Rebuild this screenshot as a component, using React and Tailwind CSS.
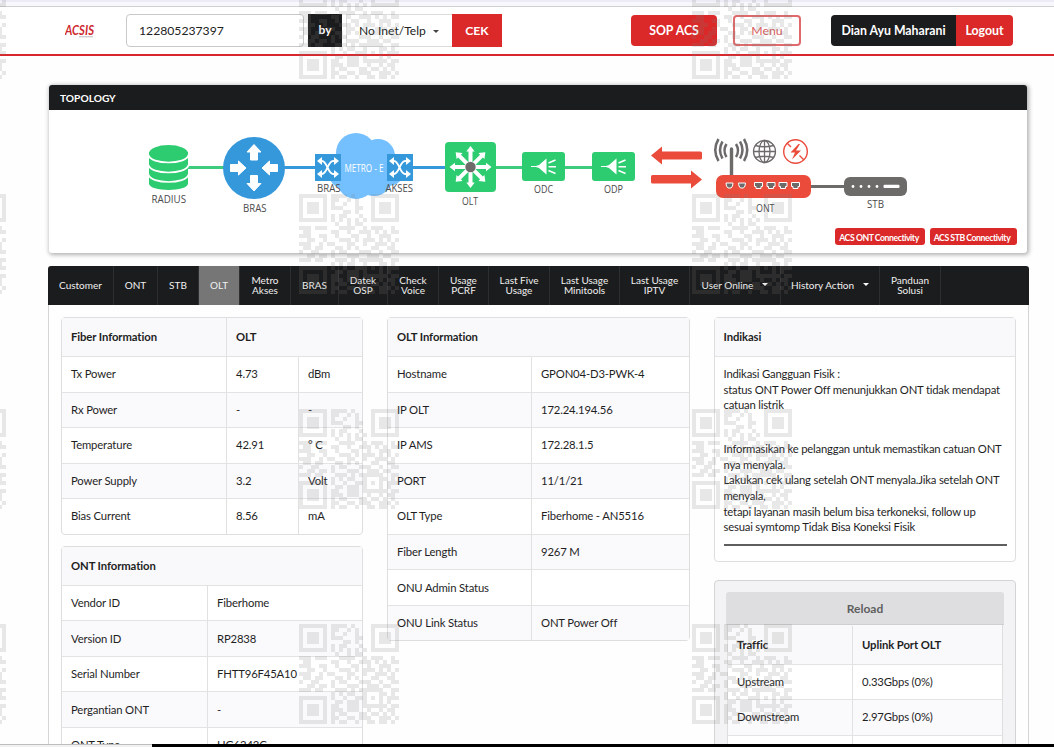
import React from "react";
import clsx from "clsx";

const qrRows = [
  "1111111011110100001111111",
  "1000001011001010001000001",
  "1011101010010010001011101",
  "1011101011100011001011101",
  "1011101000011010001011101",
  "1000001010110001001000001",
  "1111111010101010101111111",
  "0000000001001011000000000",
  "1110111000111100101110010",
  "0110000011001001110101011",
  "1110011001000110010011100",
  "0011001000111010111010101",
  "1110010110001100100111010",
  "0110110001101010001100110",
  "1001100010110001110010011",
  "0011011010001110011101100",
  "1110110001110101111110011",
  "0000000010101100100011010",
  "1111111010010011101010111",
  "1000001001101110100010100",
  "1011101011001110111111011",
  "1011101011101110010010110",
  "1011101010110001101101010",
  "1000001011001101110011101",
  "1111111010110010011011010",
];

const qrPath = qrRows
  .map((row, y) =>
    row
      .split("")
      .map((c, x) => (c === "1" ? `M${x * 4} ${y * 4}h4v4h-4z` : ""))
      .join("")
  )
  .join("");

function Watermark() {
  return (
    <svg className="absolute inset-0 pointer-events-none" width="1054" height="747" shapeRendering="crispEdges">
      {[-94, 299, 692].map((x) =>
        [-21, 194, 409, 624].map((y) => (
          <path key={`${x}-${y}`} d={qrPath} transform={`translate(${x} ${y})`} fill="#808080" fillOpacity="0.18" />
        ))
      )}
    </svg>
  );
}

function Caret({ className }) {
  return <span className={clsx("inline-block border-x-[3px] border-x-transparent border-t-[3px]", className)} />;
}

function Header() {
  return (
    <header className="h-[56px] border-b-2 border-[#d8262c] bg-white">
      <div className="h-[2px] bg-[#edebf5]" />
      <div className="h-[5px] border-b border-[#cfcfcf] bg-[#f8f8fc]" />
      <div className="flex items-start pt-[7px]">
        <div className="ml-[65px] w-[61px] pt-[8px] italic">
          <svg width="34" height="18">
            <text x="0" y="12.5" textLength="29" lengthAdjust="spacingAndGlyphs" fill="#cf2a30" fontSize="13" fontWeight="700">
              ACSIS
            </text>
            <path d="M14 14.8h14" stroke="#bbb" strokeWidth="1" />
          </svg>
        </div>
        <div className="flex h-[33px] w-[178px] items-center rounded-[4px] border border-[#c9c9c9] px-3 pt-px text-[12.2px]">
          122805237397
        </div>
        <div className="ml-[4px] flex h-[33px] w-[34px] items-center justify-center bg-[#1b1c1d] pb-px text-[12px] font-bold text-white">by</div>
        <div className="ml-[4px] flex h-[33px] w-[106px] items-center border border-r-0 border-[#dcdcdc] pl-[12px] pt-px text-[12.1px]">
          <span className="whitespace-nowrap">No Inet/Telp</span>
          <Caret className="ml-[7px] border-t-[#444]" />
        </div>
        <div className="flex h-[33px] w-[50px] items-center justify-center bg-[#db2828] pt-px text-[12.2px] font-bold text-white">CEK</div>
        <div className="mt-px ml-[129px] flex h-[31px] w-[86px] items-center justify-center rounded-[4px] bg-[#db2828] pt-px text-[12.3px] font-bold text-white">
          SOP ACS
        </div>
        <div className="mt-px ml-[16px] flex h-[31px] w-[68px] items-center justify-center rounded-[4px] border-2 border-[#e0696b] pt-px text-[12.3px] text-[#d9605e]">
          Menu
        </div>
        <div className="mt-px ml-[30px] flex h-[31px] w-[125px] items-center justify-center rounded-l-[4px] bg-[#1b1c1d] pt-px text-[12.3px] font-bold text-white">
          Dian Ayu Maharani
        </div>
        <div className="mt-px flex h-[31px] w-[57px] items-center justify-center rounded-r-[4px] bg-[#db2828] pt-px text-[12.3px] font-bold text-white">
          Logout
        </div>
      </div>
    </header>
  );
}

function NodeLabel({ x, y, width, children, fill = "#4a4a4a" }) {
  return (
    <text
      x={x}
      y={y}
      textLength={width}
      lengthAdjust="spacingAndGlyphs"
      fill={fill}
      fontSize="11"
      fontFamily="'Open Sans', 'Noto Sans', sans-serif"
      fontWeight="500"
    >
      {children}
    </text>
  );
}

function Shuffle({ x, y }) {
  return (
    <g transform={`translate(${x} ${y})`}>
      <rect width="26" height="27" fill="#3598db" />
      <g fill="none" stroke="#fff" strokeWidth="1.8">
        <path d="M4 7h3c5 0 6 13 11 13h3M4 20h3c5 0 6-13 11-13h3" />
      </g>
      <path d="M19 3l5 4-5 4zM19 16l5 4-5 4zM7 3L2 7l5 4zM7 16l-5 4 5 4z" fill="#fff" />
    </g>
  );
}

function Splitter({ x, y }) {
  return (
    <g transform={`translate(${x} ${y})`}>
      <rect width="43" height="29" rx="3" fill="#2ecc71" />
      <path d="M9 14h5l3-1 7.500-6.500v16L17 16l-3-1H9z" fill="#fff" />
      <path d="M26.500 11l7-3M26.500 14.800H34M26.500 18.500l7 3" stroke="#fff" strokeWidth="1.5" />
    </g>
  );
}

function Topology() {
  return (
    <section className="ml-[49px] mt-[29px] h-[168px] w-[978px] rounded-[3px] bg-white shadow-[1px_1px_4px_1px_rgba(0,0,0,0.3)]">
      <div className="flex h-[25px] items-center rounded-t-[3px] bg-[#1b1c1d] pl-[11px] pt-[2px] text-[10.2px] font-bold text-white">TOPOLOGY</div>
      <svg className="block" width="978" height="118" viewBox="49 110 978 118">
        {/* links */}
        <g strokeWidth="3">
          <path d="M188 167.500h36M495 167.500h28M564 167.500h29" stroke="#3fcb7e" />
          <path d="M284 167.500h32M412 167.500h34" stroke="#3598db" />
          <path d="M810 186.500h36" stroke="#6d6a6a" />
        </g>
        {/* radius database */}
        <path d="M149 152v31.500c0 8.500 39 8.500 39 0V152z" fill="#2ecc71" />
        <ellipse cx="168.500" cy="153.500" rx="19.500" ry="8.500" fill="#2ecc71" />
        <path d="M148.500 155c2 10 38 10 40 0M148.500 165c2 10 38 10 40 0M148.500 174.500c2 10 38 10 40 0" fill="none" stroke="#fff" strokeWidth="1.700" />
        <NodeLabel x={151.500} y={203} width={34.500}>RADIUS</NodeLabel>
        {/* bras router */}
        <circle cx="254" cy="168" r="31" fill="#3598db" />
        <g fill="#fff" stroke="#fff" strokeWidth="1" strokeLinejoin="round">
          <path d="M254 144.500l7 7.500h-3.500v8h-7v-8H247z" />
          <path d="M254 191l7-7.500h-3.500v-8h-7v8H247z" />
          <path d="M246 168l-7.500-7v3.500h-8v7h8v3.500z" />
          <path d="M262 168l7.500-7v3.500h8v7h-8v3.500z" />
        </g>
        <NodeLabel x={243} y={212} width={23.500}>BRAS</NodeLabel>
        {/* metro cloud */}
        <g fill="#74bffe">
          <circle cx="356" cy="153" r="20" />
          <circle cx="378" cy="156" r="17" />
          <circle cx="345" cy="172" r="17" />
          <circle cx="356" cy="180" r="19" />
          <circle cx="374" cy="178" r="18" />
          <circle cx="389" cy="171" r="15" />
        </g>
        <Shuffle x={315} y={154} />
        <Shuffle x={387} y={154} />
        <NodeLabel x={317} y={192} width={23.500}>BRAS</NodeLabel>
        <NodeLabel x={344.500} y={172} width={39} fill="#fff">METRO - E</NodeLabel>
        <NodeLabel x={385.500} y={192} width={27.500}>AKSES</NodeLabel>
        {/* olt */}
        <rect x="445" y="142" width="51" height="50" rx="4" fill="#2ecc71" />
        <g fill="#fff">
          {[0, 45, 90, 135, 180, 225, 270, 315].map((a) => (
            <path key={a} transform={`rotate(${a} 470.500 167)`} d="M470.500 146l4.200 5.500h-2.200v16h-4v-16h-2.200z" />
          ))}
        </g>
        <circle cx="470.500" cy="167" r="5.200" fill="#6d6a6a" />
        <NodeLabel x={462} y={205} width={16}>OLT</NodeLabel>
        <Splitter x={522} y={152} />
        <NodeLabel x={534} y={193} width={19}>ODC</NodeLabel>
        <Splitter x={592} y={152} />
        <NodeLabel x={604} y={193} width={19}>ODP</NodeLabel>
        {/* direction arrows */}
        <g fill="#ea4b3b">
          <path d="M651 155.500l11-9v5h38.500q1.500 0 1.500 1.500v5q0 1.500-1.500 1.500H662v5z" />
          <path d="M702 179.500l-11-9v4.500h-38.500q-1.500 0-1.500 1.500v5.500q0 1.500 1.500 1.500H691v5z" />
        </g>
        {/* ont */}
        <path d="M731.500 149v28" stroke="#6d6a6a" strokeWidth="3.400" strokeLinecap="round" />
        <g fill="none" stroke="#6d6a6a" strokeWidth="2.500">
          <path d="M726.500 144q-4 6.500 0 13M722.500 141.500q-5 8.500 0 17M718.500 139q-6.500 11 0 22" />
          <path d="M736 144q4 6.500 0 13M740 141.500q5 8.500 0 17M744 139q6.500 11 0 22" />
        </g>
        <g fill="none" stroke="#6d6a6a" strokeWidth="1.300">
          <circle cx="764.500" cy="151.500" r="11" />
          <ellipse cx="764.500" cy="151.500" rx="5.500" ry="11" />
          <path d="M764.500 140.500v22M753.500 151.500h22M755.500 145.500q9 2.500 18 0M755.500 157.500q9-2.500 18 0" />
        </g>
        <circle cx="795.500" cy="151.500" r="11.800" fill="none" stroke="#ea4b3b" strokeWidth="1.400" />
        <path d="M787 143l4 4M799.500 155.500l4.500 4.500" stroke="#ea4b3b" strokeWidth="1.400" />
        <path d="M798.500 144l-8 8.500h4.500l-3 7 9-9H796l4-6.500z" fill="#ea4b3b" />
        <rect x="716" y="175" width="95" height="23" rx="7" fill="#ea4b3b" />
        {[726, 738.5].map((x) => (
          <path key={x} d={`M${x} 183h7l-.5 3-1.500 2h-3l-1.500-2z`} fill="#6d6a6a" stroke="#fff" strokeWidth="1" />
        ))}
        {[754.5, 767, 779, 791.5].map((x) => (
          <path key={x} d={`M${x} 182.500h8v4h-1.500v2h-5v-2h-1.500z`} fill="#6d6a6a" stroke="#fff" strokeWidth="1" />
        ))}
        <NodeLabel x={756} y={212} width={18.500}>ONT</NodeLabel>
        {/* stb */}
        <rect x="844" y="177" width="63" height="19" rx="6" fill="#6d6a6a" />
        {[853, 861, 869, 877].map((x) => (
          <circle key={x} cx={x} cy="186.500" r="1.400" fill="#fff" />
        ))}
        <rect x="883.500" y="184.700" width="16" height="3.300" rx="1" fill="#fff" />
        <NodeLabel x={867} y={208} width={17}>STB</NodeLabel>
      </svg>
      <div className="flex justify-end gap-[5px] pr-[10px] text-[8.7px] font-bold tracking-[-0.45px] whitespace-nowrap text-white">
        <div className="flex h-[17px] w-[90px] items-center justify-center rounded-[3px] bg-[#db2828] pt-[2px] pr-[2px]">ACS ONT Connectivity</div>
        <div className="flex h-[17px] w-[87px] items-center justify-center rounded-[3px] bg-[#db2828] pt-[2px] pr-[3px]">ACS STB Connectivity</div>
      </div>
    </section>
  );
}

const tabs = [
  { label: ["Customer"], width: "w-[66px]" },
  { label: ["ONT"], width: "w-[44px]" },
  { label: ["STB"], width: "w-[41px]" },
  { label: ["OLT"], width: "w-[41px]", active: true },
  { label: ["Metro", "Akses"], width: "w-[51px]" },
  { label: ["BRAS"], width: "w-[48px]" },
  { label: ["Datek", "OSP"], width: "w-[49px]" },
  { label: ["Check", "Voice"], width: "w-[51px]" },
  { label: ["Usage", "PCRF"], width: "w-[50px]" },
  { label: ["Last Five", "Usage"], width: "w-[61px]" },
  { label: ["Last Usage", "Minitools"], width: "w-[70px]" },
  { label: ["Last Usage", "IPTV"], width: "w-[70px]" },
  { label: ["User Online"], width: "w-[91px]", caret: true },
  { label: ["History Action"], width: "w-[99px]", caret: true },
  { label: ["Panduan", "Solusi"], width: "w-[61px]" },
];

function Tabs() {
  return (
    <nav className="ml-[48px] mt-[13px] flex h-[39px] w-[981px] rounded-t-[3px] bg-[#1b1c1d] text-[10px] leading-[10px] text-[#f0f0f0]">
      {tabs.map((tab) => (
        <div
          key={tab.label.join(" ")}
          className={clsx(
            "flex shrink-0 items-center justify-center border-r border-[#2d2e2f] pb-[1.5px] text-center whitespace-nowrap",
            tab.width,
            tab.active && "bg-[#767676]"
          )}
        >
          <div>
            {tab.label.map((line) => (
              <div key={line}>{line}</div>
            ))}
          </div>
          {tab.caret && <Caret className="ml-[9px] border-t-white" />}
        </div>
      ))}
    </nav>
  );
}

// widths: one class per column, the last column takes the rest
function DataTable({ head, headWidths, rows, widths, square }) {
  return (
    <div className={clsx("border border-[#dededf] bg-white", square ? "border-t-0" : "rounded-[4px]")}>
      <div className={clsx("flex bg-[#f9f9fb] font-bold tracking-[-0.1px]", square ? "h-[38.500px] pt-px" : "h-[38px]")}>
        {head.map((cell, i) => (
          <div
            key={cell}
            className={clsx("flex items-center pl-[9px]", i > 0 && "border-l border-[#e1e1e2]", headWidths[i] || "flex-1")}
          >
            {cell}
          </div>
        ))}
      </div>
      {rows.map((row, r) => (
        <div key={r} className={clsx("flex h-[35.550px] border-t border-[#e3e3e4]", r % 2 === 1 && "bg-[#faf9fc]")}>
          {row.map((cell, i) => (
            <div
              key={i}
              className={clsx("flex items-center pl-[9px] pb-[0.4px] whitespace-nowrap", i > 0 && "border-l border-[#e1e1e2]", widths[i] || "flex-1")}
            >
              {cell}
            </div>
          ))}
        </div>
      ))}
    </div>
  );
}

function Content() {
  return (
    <main className="ml-[48px] flex h-[439px] w-[981px] items-start overflow-hidden border-x border-[#d4d4d5] pl-[12px] pt-[12px] text-[11.3px] leading-[15.600px] tracking-[-0.15px] text-[#1f1f1f]">
      <div className="mr-[24px] flex w-[302px] shrink-0 flex-col gap-[11px]">
        <DataTable
          head={["Fiber Information", "OLT"]}
          headWidths={["w-[164px]"]}
          widths={["w-[164px]", "w-[72px]"]}
          rows={[
            ["Tx Power", "4.73", "dBm"],
            ["Rx Power", "-", "-"],
            ["Temperature", "42.91", "° C"],
            ["Power Supply", "3.2", "Volt"],
            ["Bias Current", "8.56", "mA"],
          ]}
        />
        <DataTable
          head={["ONT Information"]}
          headWidths={[]}
          widths={["w-[145px]"]}
          rows={[
            ["Vendor ID", "Fiberhome"],
            ["Version ID", "RP2838"],
            ["Serial Number", "FHTT96F45A10"],
            ["Pergantian ONT", "-"],
            ["ONT Type", "HG6243C"],
          ]}
        />
      </div>
      <div className="mr-[24px] w-[303px] shrink-0">
        <DataTable
          head={["OLT Information"]}
          headWidths={[]}
          widths={["w-[143px]"]}
          rows={[
            ["Hostname", "GPON04-D3-PWK-4"],
            ["IP OLT", "172.24.194.56"],
            ["IP AMS", "172.28.1.5"],
            ["PORT", "11/1/21"],
            ["OLT Type", "Fiberhome - AN5516"],
            ["Fiber Length", "9267 M"],
            ["ONU Admin Status", ""],
            ["ONU Link Status", "ONT Power Off"],
          ]}
        />
      </div>
      <div className="flex w-[302px] shrink-0 flex-col gap-[18px]">
        <div className="h-[245px] rounded-[4px] border border-[#dededf] bg-white">
          <div className="flex h-[39px] items-center border-b border-[#e3e3e4] bg-[#f9f9fb] pl-[8.5px] font-bold tracking-[-0.1px]">Indikasi</div>
          <div className="px-[8.5px] pt-[9px] tracking-[-0.2px] whitespace-nowrap">
            <p>Indikasi Gangguan Fisik :</p>
            <p>status ONT Power Off menunjukkan ONT tidak mendapat</p>
            <p>catuan listrik</p>
            <p className="mt-[28.500px]">Informasikan ke pelanggan untuk memastikan catuan ONT</p>
            <p>nya menyala.</p>
            <p>Lakukan cek ulang setelah ONT menyala.Jika setelah ONT</p>
            <p>menyala,</p>
            <p>tetapi layanan masih belum bisa terkoneksi, follow up</p>
            <p>sesuai symtomp Tidak Bisa Koneksi Fisik</p>
            <div className="mt-[9.500px] h-[2px] bg-[#5f5f5f]" />
          </div>
        </div>
        <div className="rounded-[4px] border border-[#d4d4d5] bg-[#f3f3f5] p-[11px] pb-[40px]">
          <div className="flex h-[33px] items-center justify-center rounded-t-[3px] border-b border-[#cfcfd1] bg-[#dedee0] pt-[2px] text-[12px] font-bold tracking-normal text-[#5e5e5f]">
            Reload
          </div>
          <div className="px-px">
            <DataTable
              square
              head={["Traffic", "Uplink Port OLT"]}
              headWidths={["w-[124px]"]}
              widths={["w-[124px]"]}
              rows={[
                ["Upstream", "0.33Gbps (0%)"],
                ["Downstream", "2.97Gbps (0%)"],
                ["", ""],
              ]}
            />
          </div>
        </div>
      </div>
    </main>
  );
}

export default function App() {
  return (
    <div className="relative h-[747px] w-[1054px] overflow-hidden bg-[#fefefe] font-[Lato,sans-serif] text-[#222]">
      <Header />
      <Topology />
      <Tabs />
      <Content />
      <div className="flex h-[3px]">
        <div className="w-[152px] border-t border-[#bdbdbd] bg-[#f1f1f1]" />
        <div className="flex-1 bg-black" />
      </div>
      <Watermark />
    </div>
  );
}
